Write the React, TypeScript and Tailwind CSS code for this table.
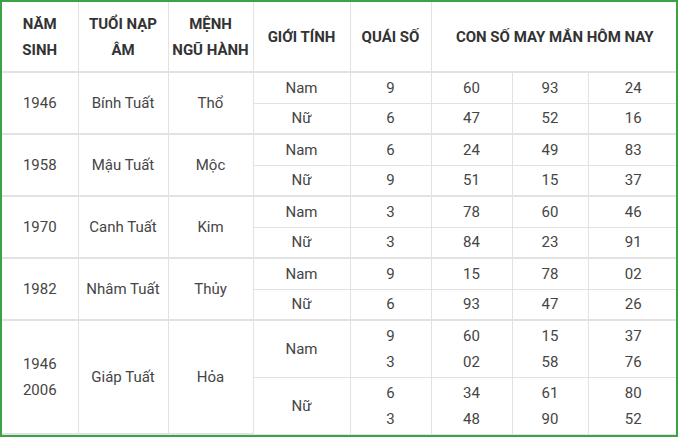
import React from "react";

type Sub = { g: string; q: string[]; n: string[][] };
type Group = { year: string[]; tuoi: string; menh: string; subs: Sub[]; tall?: boolean };

const data: Group[] = [
  { year: ["1946"], tuoi: "Bính Tuất", menh: "Thổ", subs: [
    { g: "Nam", q: ["9"], n: [["60", "93", "24"]] },
    { g: "Nữ", q: ["6"], n: [["47", "52", "16"]] },
  ] },
  { year: ["1958"], tuoi: "Mậu Tuất", menh: "Mộc", subs: [
    { g: "Nam", q: ["6"], n: [["24", "49", "83"]] },
    { g: "Nữ", q: ["9"], n: [["51", "15", "37"]] },
  ] },
  { year: ["1970"], tuoi: "Canh Tuất", menh: "Kim", subs: [
    { g: "Nam", q: ["3"], n: [["78", "60", "46"]] },
    { g: "Nữ", q: ["3"], n: [["84", "23", "91"]] },
  ] },
  { year: ["1982"], tuoi: "Nhâm Tuất", menh: "Thủy", subs: [
    { g: "Nam", q: ["9"], n: [["15", "78", "02"]] },
    { g: "Nữ", q: ["6"], n: [["93", "47", "26"]] },
  ] },
  { year: ["1946", "2006"], tuoi: "Giáp Tuất", menh: "Hỏa", tall: true, subs: [
    { g: "Nam", q: ["9", "3"], n: [["60", "15", "37"], ["02", "58", "76"]] },
    { g: "Nữ", q: ["6", "3"], n: [["34", "61", "80"], ["48", "90", "52"]] },
  ] },
];

const cell = "border border-[#e2e2e2] text-center align-middle p-0";

export default function App() {
  return (
    <div className="w-[680px] h-[438px] bg-white" style={{ fontFamily: "Roboto, 'Liberation Sans', sans-serif" }}>
      <div className="w-[678px] h-[437px] border-2 border-[#3ba343] overflow-hidden">
        <table className="table-fixed border-collapse w-[676px] text-[15px] text-[#454545]">
          <colgroup>
            <col className="w-[76px]" />
            <col className="w-[90px]" />
            <col className="w-[85px]" />
            <col className="w-[97px]" />
            <col className="w-[81px]" />
            <col className="w-[81px]" />
            <col className="w-[76px]" />
            <col className="w-[90px]" />
          </colgroup>
          <thead>
            <tr className="h-[70px] font-bold text-[#333] leading-[26px]">
              <th className={`${cell} border-t-0 border-l-0 border-b-2`}>NĂM<br />SINH</th>
              <th className={`${cell} border-t-0 border-b-2`}>TUỔI NẠP<br />ÂM</th>
              <th className={`${cell} border-t-0 border-b-2`}>MỆNH<br />NGŨ HÀNH</th>
              <th className={`${cell} border-t-0 border-b-2`}>GIỚI TÍNH</th>
              <th className={`${cell} border-t-0 border-b-2`}>QUÁI SỐ</th>
              <th colSpan={3} className={`${cell} border-t-0 border-r-0 border-b-2`}>CON SỐ MAY MẮN HÔM NAY</th>
            </tr>
          </thead>
          <tbody>
            {data.map((grp, gi) =>
              grp.subs.map((s, si) => {
                const h = grp.tall ? "h-[57px]" : "h-[31px]";
                const last = si === grp.subs.length - 1 && gi < data.length - 1;
                const bb = last ? "border-b-2" : "";
                return (
                  <tr key={`${gi}-${si}`} className={`${h} leading-[26px]`}>
                    {si === 0 && (
                      <>
                        <td rowSpan={2} className={`${cell} border-l-0 border-b-2`}>
                          {grp.year.map((y) => (<div key={y}>{y}</div>))}
                        </td>
                        <td rowSpan={2} className={`${cell} border-b-2`}>{grp.tuoi}</td>
                        <td rowSpan={2} className={`${cell} border-b-2`}>{grp.menh}</td>
                      </>
                    )}
                    <td className={`${cell} ${bb}`}>{s.g}</td>
                    <td className={`${cell} ${bb}`}>
                      {s.q.map((q, i) => (<div key={i}>{q}</div>))}
                    </td>
                    {[0, 1, 2].map((c) => (
                      <td key={c} className={`${cell} ${bb} ${c === 2 ? "border-r-0" : ""}`}>
                        {s.n.map((row, i) => (<div key={i}>{row[c]}</div>))}
                      </td>
                    ))}
                  </tr>
                );
              })
            )}
          </tbody>
        </table>
      </div>
    </div>
  );
}
